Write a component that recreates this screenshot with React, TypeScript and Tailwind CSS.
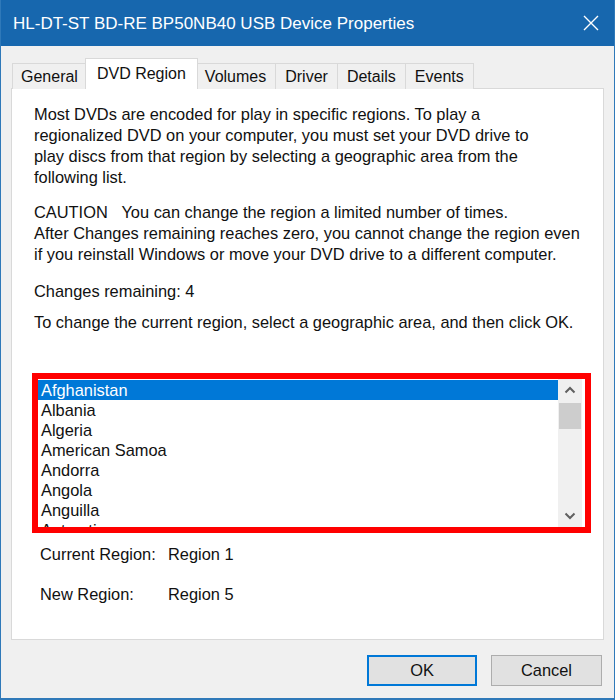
import React from "react";

const tabs = ["General", "DVD Region", "Volumes", "Driver", "Details", "Events"];

const countries = [
  "Afghanistan",
  "Albania",
  "Algeria",
  "American Samoa",
  "Andorra",
  "Angola",
  "Anguilla",
  "Antarctica",
];

function ChevronUp() {
  return (
    <svg width="12" height="8" viewBox="0 0 12 8" fill="none">
      <path d="M1.5 6.5 L6 2 L10.5 6.5" stroke="#606060" strokeWidth="2" />
    </svg>
  );
}

function ChevronDown() {
  return (
    <svg width="12" height="8" viewBox="0 0 12 8" fill="none">
      <path d="M1.5 1.5 L6 6 L10.5 1.5" stroke="#606060" strokeWidth="2" />
    </svg>
  );
}

export default function App() {
  const font = { fontFamily: '"Liberation Sans", Arial, sans-serif' };
  return (
    <div
      className="w-[615px] h-[700px] bg-[#f0f0f0] border-x border-b-2 border-[#2f79b9] flex flex-col overflow-hidden text-[#111]"
      style={font}
    >
      {/* title bar */}
      <div className="h-[46px] shrink-0 bg-[#1767ae] flex items-center justify-between pl-[13px] pr-[16px] -mx-px">
        <span className="text-white text-[17px] leading-none">
          HL-DT-ST BD-RE BP50NB40 USB Device Properties
        </span>
        <svg width="16" height="16" viewBox="0 0 16 16">
          <path d="M1 1 L15 15 M15 1 L1 15" stroke="#ffffff" strokeWidth="1.4" />
        </svg>
      </div>

      {/* tab strip */}
      <div className="mt-[12px] ml-[11px] h-[31px] flex items-end relative z-10">
        {tabs.map((t) => {
          const active = t === "DVD Region";
          return active ? (
            <div
              key={t}
              className="h-[31px] -mx-[2px] px-[11px] bg-white border border-b-0 border-[#d9d9d9] flex items-center text-[16px] relative z-10"
            >
              {t}
            </div>
          ) : (
            <div
              key={t}
              className="h-[26px] px-[9px] bg-[#f0f0f0] border border-b-0 border-[#d9d9d9] -ml-px first:ml-0 first:px-[8px] flex items-center text-[16px]"
            >
              {t}
            </div>
          );
        })}
      </div>

      {/* page */}
      <div className="mx-[10px] -mt-px h-[552px] bg-white border border-[#d9d9d9] flex flex-col text-[16.4px]">
        <div className="pl-[22px] pt-[15px] leading-[21px]">
          <p>
            Most DVDs are encoded for play in specific regions. To play a
            <br />
            regionalized DVD on your computer, you must set your DVD drive to
            <br />
            play discs from that region by selecting a geographic area from the
            <br />
            following list.
          </p>
          <p className="mt-[14px]">
            CAUTION&nbsp;&nbsp;&nbsp;You can change the region a limited number of times.
            <br />
            After Changes remaining reaches zero, you cannot change the region even
            <br />
            if you reinstall Windows or move your DVD drive to a different computer.
          </p>
          <p className="mt-[16px]">Changes remaining: 4</p>
          <p className="mt-[10px]">
            To change the current region, select a geographic area, and then click OK.
          </p>
        </div>

        {/* region list */}
        <div className="mt-[40px] ml-[20px] w-[559px] h-[160px] border-[6px] border-[#ff0000] bg-white">
          <div className="h-full flex">
            <div className="flex-1 overflow-hidden pt-px">
              {countries.map((c, i) => (
                <div
                  key={c}
                  className={
                    "h-[20px] pl-[3px] flex items-center leading-none " +
                    (i === 0 ? "bg-[#0078d7] text-white" : "")
                  }
                >
                  {c}
                </div>
              ))}
            </div>
            <div className="w-[24px] bg-[#f0f0f0] flex flex-col items-center mr-[3px]">
              <div className="h-[22px] flex items-center justify-center">
                <ChevronUp />
              </div>
              <div className="w-[22px] h-[26px] mt-[2px] bg-[#cdcdcd]" />
              <div className="flex-1" />
              <div className="h-[22px] flex items-center justify-center">
                <ChevronDown />
              </div>
            </div>
          </div>
        </div>

        <div className="ml-[28px] mt-[11px] leading-[21px]">
          <div className="flex">
            <span className="w-[128px]">Current Region:</span>
            <span>Region 1</span>
          </div>
          <div className="flex mt-[19px]">
            <span className="w-[128px]">New Region:</span>
            <span>Region 5</span>
          </div>
        </div>
      </div>

      {/* buttons */}
      <div className="flex justify-end gap-[14px] pr-[12px] mt-[15px]">
        <button className="w-[110px] h-[31px] bg-[#e1e1e1] border-2 border-[#0078d7] text-[16.4px]">
          OK
        </button>
        <button className="w-[111px] h-[31px] bg-[#e1e1e1] border border-[#adadad] text-[16.4px]">
          Cancel
        </button>
      </div>
    </div>
  );
}
